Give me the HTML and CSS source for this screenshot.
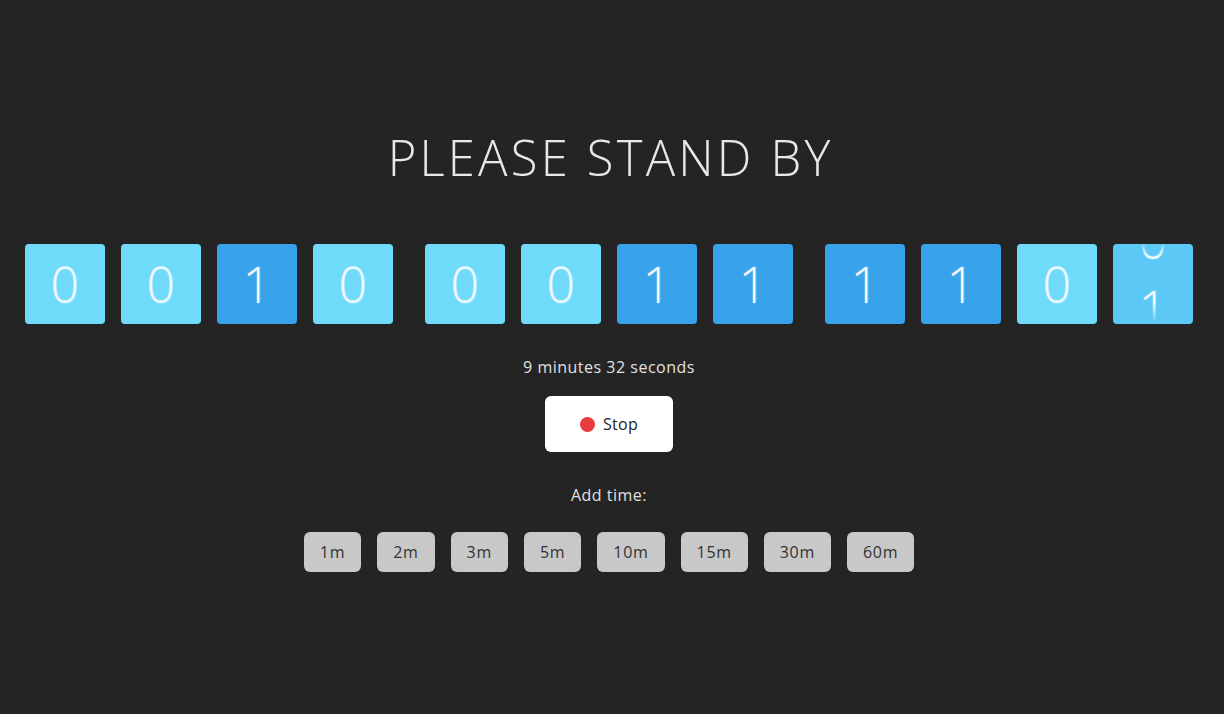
FILE: index.html
```html
<!DOCTYPE html>
<html lang="en">
<head>
<meta charset="utf-8">
<title>Please stand by</title>
<link rel="stylesheet" href="styles.css">
</head>
<body>
<main class="page">
  <h1 class="title">PLEASE STAND BY</h1>
  <div class="clock">
    <div class="group">
      <div class="tile tile-light"><span class="digit">0</span></div>
      <div class="tile tile-light"><span class="digit">0</span></div>
      <div class="tile tile-dark"><span class="digit">1</span></div>
      <div class="tile tile-light"><span class="digit">0</span></div>
    </div>
    <div class="group">
      <div class="tile tile-light"><span class="digit">0</span></div>
      <div class="tile tile-light"><span class="digit">0</span></div>
      <div class="tile tile-dark"><span class="digit">1</span></div>
      <div class="tile tile-dark"><span class="digit">1</span></div>
    </div>
    <div class="group">
      <div class="tile tile-dark"><span class="digit">1</span></div>
      <div class="tile tile-dark"><span class="digit">1</span></div>
      <div class="tile tile-light"><span class="digit">0</span></div>
      <div class="tile tile-mid tile-rolling">
        <span class="digit digit-out">0</span>
        <span class="digit digit-in">1</span>
      </div>
    </div>
  </div>
  <p class="remaining">9 minutes 32 seconds</p>
  <button class="stop" type="button"><span class="stop-dot"></span>Stop</button>
  <p class="add-label">Add time:</p>
  <div class="add-row">
    <button class="add" type="button">1m</button>
    <button class="add" type="button">2m</button>
    <button class="add" type="button">3m</button>
    <button class="add" type="button">5m</button>
    <button class="add" type="button">10m</button>
    <button class="add" type="button">15m</button>
    <button class="add" type="button">30m</button>
    <button class="add" type="button">60m</button>
  </div>
</main>
</body>
</html>
```
FILE: styles.css
```css
html, body {
  margin: 0;
  padding: 0;
  background: #242424;
  height: 100%;
}
body {
  font-family: "Open Sans", "Noto Sans", "DejaVu Sans", sans-serif;
  color: #e4e4e4;
}
.page {
  display: flex;
  flex-direction: column;
  align-items: center;
  padding-top: 127px;
  padding-right: 6px;
}
.title {
  margin: 0;
  font-size: 49px;
  line-height: 60px;
  font-weight: 300;
  color: #e8e8e8;
  letter-spacing: 3.2px;
  padding-left: 3.2px;
}
.clock {
  display: flex;
  gap: 32px;
  margin-top: 57px;
}
.group {
  display: flex;
  gap: 16px;
}
.tile {
  width: 80px;
  height: 80px;
  border-radius: 4px;
  display: flex;
  align-items: center;
  justify-content: center;
  overflow: hidden;
  position: relative;
}
.tile-light { background: #6fdaf9; }
.tile-dark { background: #38a2eb; }
.tile-mid { background: #5bc8f5; }
.digit {
  font-size: 50px;
  font-weight: 300;
  line-height: 1;
  color: #eefaff;
  text-shadow: 0 0 2px rgba(255,255,255,0.6);
}
.digit-out {
  position: absolute;
  left: 0;
  right: 0;
  top: -29px;
  text-align: center;
  -webkit-mask-image: linear-gradient(to bottom, transparent 55%, #000 80%);
  mask-image: linear-gradient(to bottom, transparent 55%, #000 80%);
}
.digit-in {
  position: absolute;
  left: 0;
  right: 0;
  top: 39px;
  text-align: center;
  -webkit-mask-image: linear-gradient(to bottom, #000 40%, transparent 80%);
  mask-image: linear-gradient(to bottom, #000 40%, transparent 80%);
}
.remaining {
  margin: 33px 0 0;
  font-size: 16px;
  line-height: 20px;
  letter-spacing: 0.5px;
  color: #e0e0e0;
}
.stop {
  margin-top: 19px;
  width: 128px;
  height: 56px;
  border: 0;
  border-radius: 6px;
  background: #ffffff;
  display: flex;
  align-items: center;
  justify-content: center;
  gap: 8px;
  font-family: inherit;
  font-size: 16px;
  letter-spacing: 0.3px;
  color: #222;
  padding: 0;
}
.stop-dot {
  width: 15px;
  height: 15px;
  border-radius: 50%;
  background: #ea3b40;
}
.add-label {
  margin: 33px 0 0;
  font-size: 16px;
  line-height: 20px;
  letter-spacing: 0.5px;
  color: #e0e0e0;
}
.add-row {
  display: flex;
  gap: 16px;
  margin-top: 27px;
}
.add {
  height: 40px;
  padding: 0 16px;
  border: 0;
  border-radius: 6px;
  background: #c8c8c8;
  font-family: inherit;
  font-size: 16px;
  letter-spacing: 0.7px;
  color: #333;
}
```
